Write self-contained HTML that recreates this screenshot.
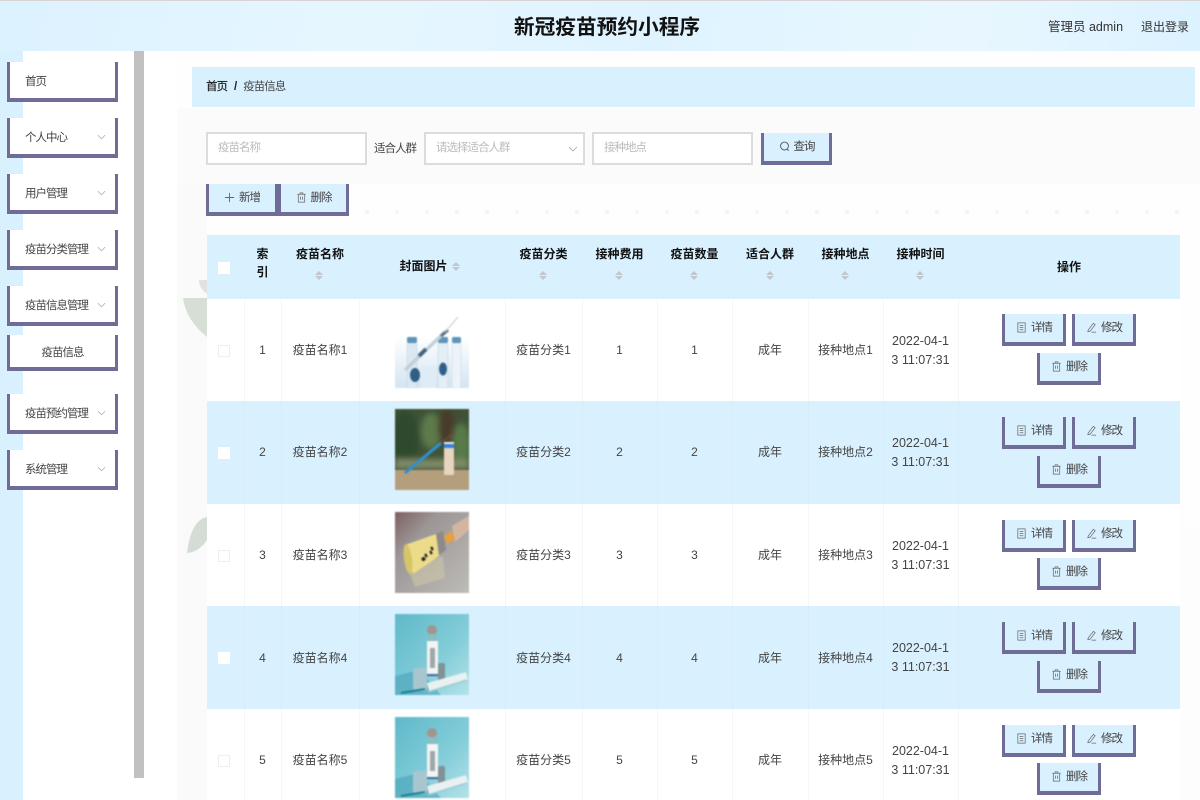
<!DOCTYPE html>
<html lang="zh"><head><meta charset="utf-8"><title>新冠疫苗预约小程序</title>
<style>
*{box-sizing:border-box}
html,body{margin:0;padding:0}
body{width:1200px;height:800px;overflow:hidden;position:relative;background:#fff;font-family:"Liberation Sans","Noto Sans CJK SC",sans-serif;font-size:12px;color:#444;filter:blur(.3px)}
.a{position:absolute;white-space:nowrap}
#hd{left:0;top:0;width:1200px;height:51px;background:linear-gradient(100deg,#dcf2ff 0%,#e6f6ff 30%,#dff3ff 55%,#e8f7ff 80%,#dcf2ff 100%);border-top:1px solid #d8d4d4}
#bg{left:177px;top:51px;width:1023px;height:749px;background:linear-gradient(#fefefe,#fdfdfd)}
#bg2{left:177px;top:108px;width:1023px;height:76px;background:#fbfbfb}
#bg3{left:177px;top:184px;width:30px;height:616px;background:#fafafa}
.n{font-size:11.500px;letter-spacing:-1px}
.mi{position:absolute;left:7px;width:111px;height:40px;background:#fff;border:solid #6f6c97;border-width:0 3px 4px 3px;color:#444;line-height:41px;padding-left:15px;font-size:11.500px;letter-spacing:-1px}
.mi svg{position:absolute;left:87px;top:16px}
.btn{position:absolute;height:32px;background:#d9f0ff;border:solid #6f6c97;border-width:0 3px 4px 3px;color:#444;text-align:center;line-height:28px;font-size:11.500px;letter-spacing:-1px}
.btn svg{vertical-align:-2px;margin-right:4px}
.ip{position:absolute;height:33px;background:#fff;border:2px solid #dcdcdc;color:#bbb;line-height:28px;padding-left:10px;font-size:11.500px;letter-spacing:-1px}
.th{position:absolute;top:235px;height:64px;font-weight:700;color:#111;text-align:center}
.band{position:absolute;left:207px;width:973px}
.c{position:absolute;text-align:center;color:#444;font-size:12px}
.d{font-size:12.500px}
.vl{position:absolute;top:299px;width:1px;height:501px;background:rgba(205,218,226,.22)}
.s{position:absolute;width:8px;height:11px}
.s:before,.s:after{content:"";position:absolute;left:0;border:4px solid transparent}
.s:before{top:-3px;border-bottom:4px solid #c2c6ce}
.s:after{top:6px;border-top:4px solid #c2c6ce}
.cb{position:absolute;left:218px;width:12px;height:12px}
.im{filter:blur(.7px)}
</style></head><body>
<svg width="0" height="0" style="position:absolute"><defs>
<linearGradient id="g1" x1="0" y1="0" x2="0" y2="1"><stop offset="0" stop-color="#fff"/><stop offset=".3" stop-color="#f2f7fb"/><stop offset="1" stop-color="#d2e4f1"/></linearGradient>
<linearGradient id="g3" x1="0" y1="0" x2="1" y2="1"><stop offset="0" stop-color="#7e5f60"/><stop offset=".3" stop-color="#9c9696"/><stop offset="1" stop-color="#bdbcb8"/></linearGradient>
<linearGradient id="g4" x1="0" y1="0" x2="1" y2="1"><stop offset="0" stop-color="#5fb9c9"/><stop offset=".6" stop-color="#84cdd9"/><stop offset="1" stop-color="#b5e2e9"/></linearGradient>
<filter id="bl2"><feGaussianBlur stdDeviation="3"/></filter>
<symbol id="chev" viewBox="0 0 10 6"><path d="M1 1l4 4 4-4" fill="none" stroke="#999" stroke-width=".7"/></symbol>
<symbol id="trash" viewBox="0 0 12 12"><path d="M1.500 2.500h9M4.500 2.500V1h3v1.500M2.500 2.500v8.500h7V2.500M5 5v3.500M7 5v3.500" fill="none" stroke="#666" stroke-width=".8"/></symbol>
<symbol id="doc" viewBox="0 0 12 12"><path d="M2 1h8v10H2zM4 4h4M4 6h4M4 8.500h4" fill="none" stroke="#666" stroke-width=".8"/></symbol>
<symbol id="pen" viewBox="0 0 12 12"><path d="M2.500 8.500L8 1.500l2 1.500-5.500 7-2.500 .5zM6 11h5" fill="none" stroke="#666" stroke-width=".8"/></symbol>
<symbol id="img1" viewBox="0 0 74 72"><rect y="20" width="74" height="52" fill="url(#g1)"/>
<rect x="12" y="27" width="10" height="45" rx="2" fill="#dbe8f2" stroke="#bcd0df" stroke-width=".5"/><rect x="12" y="21" width="10" height="6" rx="1.500" fill="#5d94ba"/>
<rect x="43" y="27" width="10" height="45" rx="2" fill="#e4eef5" stroke="#bcd0df" stroke-width=".5"/><rect x="43" y="21" width="10" height="6" rx="1.500" fill="#5d94ba"/>
<rect x="57" y="27" width="9" height="45" rx="2" fill="#edf3f8" stroke="#c6d6e2" stroke-width=".5"/><rect x="57" y="21" width="9" height="6" rx="1.500" fill="#5d94ba"/>
<rect x="26" y="50" width="15" height="22" fill="#dfecf5"/>
<ellipse cx="20" cy="59" rx="5" ry="7" fill="#2f5f86"/><ellipse cx="48" cy="53" rx="4" ry="6.500" fill="#2f5f86"/>
<path d="M10 54L50 16" stroke="#c2d0da" stroke-width="3.500"/><path d="M24 40L31 33" stroke="#46627e" stroke-width="4"/><path d="M46 20L53 14" stroke="#5a6f84" stroke-width="3"/><path d="M50 16L63 1" stroke="#c4ccd2" stroke-width="1"/></symbol>
<symbol id="img2" viewBox="0 0 74 81"><rect width="74" height="62" fill="#3f5236"/><g filter="url(#bl2)"><ellipse cx="10" cy="30" rx="14" ry="28" fill="#2f4a2e"/><ellipse cx="36" cy="22" rx="10" ry="18" fill="#5d7a4b"/><ellipse cx="52" cy="18" rx="9" ry="18" fill="#4a3b2c"/><ellipse cx="66" cy="36" rx="9" ry="22" fill="#577a48"/><rect y="50" width="74" height="10" fill="#7f8a68"/></g><rect y="61" width="74" height="20" fill="#b49e7c"/>
<path d="M10 64L46 34" stroke="#2f8fd0" stroke-width="3"/><path d="M46 34L60 23" stroke="#6b4a3a" stroke-width="1.500"/><rect x="49" y="33" width="10" height="33" rx="1" fill="#e6d6bf"/><rect x="49" y="33" width="10" height="6" fill="#3d7fd8"/><rect x="49" y="33" width="10" height="2" fill="#e6eef8"/></symbol>
<symbol id="img3" viewBox="0 0 74 81"><rect width="74" height="81" fill="url(#g3)"/><path d="M57 14L74 4v14L60 30z" fill="#d3b6a2"/><path d="M49 24l8-5 3 8-8 5z" fill="#e8a040"/><path d="M40 22l8-3 3 19-7 5z" fill="#8e8a8a"/><path d="M13 57l35-13 2 22-30 9z" fill="#d0cba6" opacity=".55"/>
<path d="M10 33L41 22 44 44 18 62z" fill="#ecdc8a"/><ellipse cx="13" cy="47" rx="4" ry="15" fill="#d6c56a" transform="rotate(-8 13 47)"/><path d="M27 48l3-2M30 44l2-1M35 41l2-1M36 37l2-1" stroke="#222" stroke-width="3.500"/></symbol>
<symbol id="img4" viewBox="0 0 74 81"><rect width="74" height="81" fill="url(#g4)"/><path d="M0 81V62L24 56 46 81z" fill="#3f9fb4" opacity=".55"/>
<rect x="18" y="54" width="14" height="23" rx="3" fill="#a9c6cf"/><rect x="43" y="49" width="7" height="18" rx="2" fill="#7f9296"/>
<circle cx="37" cy="16" r="5" fill="#a0968e"/><rect x="33" y="20" width="9" height="9" fill="#8cbcc4"/><rect x="32" y="27" width="11" height="36" fill="#f3f5f3"/><rect x="35" y="34" width="5" height="20" fill="#4a5a60" opacity=".5"/><rect x="32" y="60" width="11" height="2.500" fill="#3f76a6"/>
<path d="M33 73L72 62" stroke="#e9f1f2" stroke-width="8"/><path d="M33 78L72 66" stroke="#9ccad3" stroke-width="1.500"/><path d="M6 79L30 75" stroke="#1f7f96" stroke-width="2"/></symbol>
</defs></svg>

<div class="a" id="bg"></div><div class="a" id="bg2"></div><div class="a" id="bg3"></div>
<svg class="a" style="left:177px;top:280px" width="30" height="300"><path d="M6 18Q9 40 30 57V18z" fill="#d7ded6"/><path d="M22 0q0 8 8 14V0z" fill="#dfe3de"/><path d="M30 237Q14 240 10 273Q22 272 30 260z" fill="#d5dcd5"/></svg>
<svg class="a" style="left:355px;top:205px" width="825" height="14"><line x1="10" y1="7" x2="825" y2="7" stroke="#f7f6ee" stroke-width="4" stroke-dasharray="4 26"/></svg>

<div class="a" id="hd"></div>
<div class="a" style="left:407px;top:13px;width:400px;text-align:center;font-size:20.700px;font-weight:700;color:#111;line-height:30px">新冠疫苗预约小程序</div>
<div class="a" style="left:1048px;top:18px;color:#333;line-height:18px;font-size:12.500px">管理员 admin</div>
<div class="a" style="left:1141px;top:18px;color:#333;line-height:18px">退出登录</div>

<div class="a" style="left:0;top:51px;width:23px;height:749px;background:#d9f1ff"></div>
<div class="a" style="left:23px;top:51px;width:111px;height:749px;background:#fff"></div>
<div class="a" style="left:134px;top:51px;width:10px;height:727px;background:#c1c1c1"></div>

<div class="mi" style="top:62px">首页</div>
<div class="mi" style="top:118px">个人中心<svg width="9" height="6"><use href="#chev"/></svg></div>
<div class="mi" style="top:174px">用户管理<svg width="9" height="6"><use href="#chev"/></svg></div>
<div class="mi" style="top:230px">疫苗分类管理<svg width="9" height="6"><use href="#chev"/></svg></div>
<div class="mi" style="top:286px">疫苗信息管理<svg width="9" height="6"><use href="#chev"/></svg></div>
<div class="mi" style="top:335px;height:36px;padding:0;text-align:center;line-height:37px">疫苗信息</div>
<div class="mi" style="top:394px">疫苗预约管理<svg width="9" height="6"><use href="#chev"/></svg></div>
<div class="mi" style="top:450px">系统管理<svg width="9" height="6"><use href="#chev"/></svg></div>

<div class="a" style="left:192px;top:67px;width:1003px;height:40px;background:#d9f1ff;line-height:41px;padding-left:14px;color:#444;font-size:11.500px;letter-spacing:-1px"><span style="color:#222;text-shadow:0 0 .4px #222">首页</span><b style="margin:0 7px;color:#222">/</b>疫苗信息</div>

<div class="ip" style="left:206px;top:132px;width:161px">疫苗名称</div>
<div class="a n" style="left:374px;top:140px;line-height:18px;color:#444">适合人群</div>
<div class="ip" style="left:424px;top:132px;width:161px">请选择适合人群<svg style="position:absolute;left:142px;top:12px" width="10" height="6"><use href="#chev"/></svg></div>
<div class="ip" style="left:592px;top:132px;width:161px">接种地点</div>
<div class="btn" style="left:761px;top:133px;width:71px"><svg width="11" height="11" viewBox="0 0 12 12"><circle cx="6" cy="5.500" r="4.300" fill="none" stroke="#555"/><path d="M9 9l1.500 1.500" stroke="#555"/></svg>查询</div>

<div class="btn" style="left:206px;top:184px;width:72px"><svg width="11" height="11" viewBox="0 0 12 12"><path d="M6 1v10M1 6h10" stroke="#666"/></svg>新增</div>
<div class="btn" style="left:278px;top:184px;width:71px"><svg width="11" height="11"><use href="#trash"/></svg>删除</div>

<div class="band" style="top:235px;height:64px;background:#d9f1ff"></div>
<div class="band" style="top:299px;height:501px;background:#fff"></div>
<div class="band" style="top:401px;height:103px;background:#d9f1ff"></div>
<div class="band" style="top:606px;height:103px;background:#d9f1ff"></div>
<i class="vl" style="left:244px"></i><i class="vl" style="left:281px"></i><i class="vl" style="left:359px"></i><i class="vl" style="left:505px"></i><i class="vl" style="left:582px"></i><i class="vl" style="left:657px"></i><i class="vl" style="left:732px"></i><i class="vl" style="left:808px"></i><i class="vl" style="left:883px"></i><i class="vl" style="left:958px"></i>

<div class="cb" style="top:262px;background:#fff"></div>
<div class="th" style="left:244px;width:37px;padding-top:10px;line-height:18px">索<br>引</div>
<div class="th" style="left:281px;width:78px;padding-top:10px;line-height:18px">疫苗名称</div><i class="s" style="left:315px;top:270px"></i>
<div class="th" style="left:359px;width:146px;line-height:62px;padding-right:17px">封面图片</div><i class="s" style="left:452px;top:261px"></i>
<div class="th" style="left:505px;width:77px;padding-top:10px;line-height:18px">疫苗分类</div><i class="s" style="left:539px;top:270px"></i>
<div class="th" style="left:582px;width:75px;padding-top:10px;line-height:18px">接种费用</div><i class="s" style="left:615px;top:270px"></i>
<div class="th" style="left:657px;width:75px;padding-top:10px;line-height:18px">疫苗数量</div><i class="s" style="left:690px;top:270px"></i>
<div class="th" style="left:732px;width:76px;padding-top:10px;line-height:18px">适合人群</div><i class="s" style="left:766px;top:270px"></i>
<div class="th" style="left:808px;width:75px;padding-top:10px;line-height:18px">接种地点</div><i class="s" style="left:841px;top:270px"></i>
<div class="th" style="left:883px;width:75px;padding-top:10px;line-height:18px">接种时间</div><i class="s" style="left:916px;top:270px"></i>
<div class="th" style="left:958px;width:222px;line-height:64px">操作</div>

<!-- row 1 -->
<div class="cb" style="top:345px;background:#fff;border:1px solid #eee"></div>
<div class="c" style="left:244px;width:37px;top:341px;line-height:18px">1</div>
<div class="c" style="left:281px;width:78px;top:341px;line-height:18px">疫苗名称1</div>
<svg class="a im" style="left:395px;top:316px" width="74" height="72"><use href="#img1"/></svg>
<div class="c" style="left:505px;width:77px;top:341px;line-height:18px">疫苗分类1</div>
<div class="c" style="left:582px;width:75px;top:341px;line-height:18px">1</div>
<div class="c" style="left:657px;width:75px;top:341px;line-height:18px">1</div>
<div class="c" style="left:732px;width:76px;top:341px;line-height:18px">成年</div>
<div class="c" style="left:808px;width:75px;top:341px;line-height:18px">接种地点1</div>
<div class="c d" style="left:883px;width:75px;top:332px;line-height:19px">2022-04-1<br>3 11:07:31</div>
<div class="btn" style="left:1002px;top:314px;width:64px"><svg width="11" height="11"><use href="#doc"/></svg>详情</div>
<div class="btn" style="left:1072px;top:314px;width:64px"><svg width="11" height="11"><use href="#pen"/></svg>修改</div>
<div class="btn" style="left:1037px;top:353px;width:64px"><svg width="11" height="11"><use href="#trash"/></svg>删除</div>

<!-- row 2 -->
<div class="cb" style="top:447px;background:#fff"></div>
<div class="c" style="left:244px;width:37px;top:443px;line-height:18px">2</div>
<div class="c" style="left:281px;width:78px;top:443px;line-height:18px">疫苗名称2</div>
<svg class="a im" style="left:395px;top:409px" width="74" height="81"><use href="#img2"/></svg>
<div class="c" style="left:505px;width:77px;top:443px;line-height:18px">疫苗分类2</div>
<div class="c" style="left:582px;width:75px;top:443px;line-height:18px">2</div>
<div class="c" style="left:657px;width:75px;top:443px;line-height:18px">2</div>
<div class="c" style="left:732px;width:76px;top:443px;line-height:18px">成年</div>
<div class="c" style="left:808px;width:75px;top:443px;line-height:18px">接种地点2</div>
<div class="c d" style="left:883px;width:75px;top:434px;line-height:19px">2022-04-1<br>3 11:07:31</div>
<div class="btn" style="left:1002px;top:417px;width:64px"><svg width="11" height="11"><use href="#doc"/></svg>详情</div>
<div class="btn" style="left:1072px;top:417px;width:64px"><svg width="11" height="11"><use href="#pen"/></svg>修改</div>
<div class="btn" style="left:1037px;top:456px;width:64px"><svg width="11" height="11"><use href="#trash"/></svg>删除</div>

<!-- row 3 -->
<div class="cb" style="top:550px;background:#fff;border:1px solid #eee"></div>
<div class="c" style="left:244px;width:37px;top:546px;line-height:18px">3</div>
<div class="c" style="left:281px;width:78px;top:546px;line-height:18px">疫苗名称3</div>
<svg class="a im" style="left:395px;top:512px" width="74" height="81"><use href="#img3"/></svg>
<div class="c" style="left:505px;width:77px;top:546px;line-height:18px">疫苗分类3</div>
<div class="c" style="left:582px;width:75px;top:546px;line-height:18px">3</div>
<div class="c" style="left:657px;width:75px;top:546px;line-height:18px">3</div>
<div class="c" style="left:732px;width:76px;top:546px;line-height:18px">成年</div>
<div class="c" style="left:808px;width:75px;top:546px;line-height:18px">接种地点3</div>
<div class="c d" style="left:883px;width:75px;top:537px;line-height:19px">2022-04-1<br>3 11:07:31</div>
<div class="btn" style="left:1002px;top:520px;width:64px"><svg width="11" height="11"><use href="#doc"/></svg>详情</div>
<div class="btn" style="left:1072px;top:520px;width:64px"><svg width="11" height="11"><use href="#pen"/></svg>修改</div>
<div class="btn" style="left:1037px;top:558px;width:64px"><svg width="11" height="11"><use href="#trash"/></svg>删除</div>

<!-- row 4 -->
<div class="cb" style="top:652px;background:#fff"></div>
<div class="c" style="left:244px;width:37px;top:649px;line-height:18px">4</div>
<div class="c" style="left:281px;width:78px;top:649px;line-height:18px">疫苗名称4</div>
<svg class="a im" style="left:395px;top:614px" width="74" height="81"><use href="#img4"/></svg>
<div class="c" style="left:505px;width:77px;top:649px;line-height:18px">疫苗分类4</div>
<div class="c" style="left:582px;width:75px;top:649px;line-height:18px">4</div>
<div class="c" style="left:657px;width:75px;top:649px;line-height:18px">4</div>
<div class="c" style="left:732px;width:76px;top:649px;line-height:18px">成年</div>
<div class="c" style="left:808px;width:75px;top:649px;line-height:18px">接种地点4</div>
<div class="c d" style="left:883px;width:75px;top:639px;line-height:19px">2022-04-1<br>3 11:07:31</div>
<div class="btn" style="left:1002px;top:622px;width:64px"><svg width="11" height="11"><use href="#doc"/></svg>详情</div>
<div class="btn" style="left:1072px;top:622px;width:64px"><svg width="11" height="11"><use href="#pen"/></svg>修改</div>
<div class="btn" style="left:1037px;top:661px;width:64px"><svg width="11" height="11"><use href="#trash"/></svg>删除</div>

<!-- row 5 -->
<div class="cb" style="top:755px;background:#fff;border:1px solid #eee"></div>
<div class="c" style="left:244px;width:37px;top:751px;line-height:18px">5</div>
<div class="c" style="left:281px;width:78px;top:751px;line-height:18px">疫苗名称5</div>
<svg class="a im" style="left:395px;top:717px" width="74" height="81"><use href="#img4"/></svg>
<div class="c" style="left:505px;width:77px;top:751px;line-height:18px">疫苗分类5</div>
<div class="c" style="left:582px;width:75px;top:751px;line-height:18px">5</div>
<div class="c" style="left:657px;width:75px;top:751px;line-height:18px">5</div>
<div class="c" style="left:732px;width:76px;top:751px;line-height:18px">成年</div>
<div class="c" style="left:808px;width:75px;top:751px;line-height:18px">接种地点5</div>
<div class="c d" style="left:883px;width:75px;top:742px;line-height:19px">2022-04-1<br>3 11:07:31</div>
<div class="btn" style="left:1002px;top:725px;width:64px"><svg width="11" height="11"><use href="#doc"/></svg>详情</div>
<div class="btn" style="left:1072px;top:725px;width:64px"><svg width="11" height="11"><use href="#pen"/></svg>修改</div>
<div class="btn" style="left:1037px;top:763px;width:64px"><svg width="11" height="11"><use href="#trash"/></svg>删除</div>
</body></html>
